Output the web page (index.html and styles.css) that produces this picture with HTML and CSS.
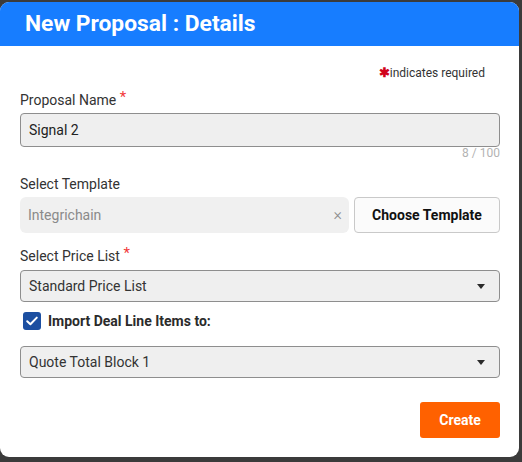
FILE: index.html
```html
<!DOCTYPE html>
<html>
<head>
<meta charset="utf-8">
<link rel="stylesheet" href="styles.css">
</head>
<body>
<div class="dialog">
  <div class="header">New Proposal : Details</div>
  <div class="content">
    <div class="req"><span class="req-star">✱</span>indicates required</div>
    <div class="label">Proposal Name <span class="star">*</span></div>
    <div class="input">Signal 2</div>
    <div class="counter">8 / 100</div>
    <div class="label label-gap">Select Template</div>
    <div class="tpl-row">
      <div class="tpl-input"><span class="tpl-text">Integrichain</span><span class="clear">×</span></div>
      <div class="btn-secondary">Choose Template</div>
    </div>
    <div class="label label-gap2">Select Price List <span class="star">*</span></div>
    <div class="select">Standard Price List<span class="caret"></span></div>
    <div class="check-row">
      <span class="checkbox"><svg width="18" height="18" viewBox="0 0 18 18"><path d="M4.2 9.2 L7.4 12.3 L13.8 5.6" fill="none" stroke="#fff" stroke-width="2" stroke-linecap="round" stroke-linejoin="round"/></svg></span>
      <span class="check-label">Import Deal Line Items to:</span>
    </div>
    <div class="select select-gap">Quote Total Block 1<span class="caret"></span></div>
    <div class="actions"><div class="btn-primary">Create</div></div>
  </div>
</div>
</body>
</html>
```
FILE: styles.css
```css
html, body {
  margin: 0;
  padding: 0;
  background: #3b3b3b;
  font-family: Roboto, "Liberation Sans", sans-serif;
}
.dialog {
  margin-top: 2px;
  width: 519px;
  height: 455px;
  background: #fff;
  border-radius: 9px;
  overflow: hidden;
}
.header {
  height: 44px;
  line-height: 44px;
  background: #177dff;
  color: #fff;
  font-size: 22.8px;
  font-weight: 700;
  padding-left: 25px;
}
.content {
  padding: 0 19px 0 20px;
}
.req {
  margin-top: 19px;
  height: 16px;
  line-height: 16px;
  font-size: 12px;
  color: #333;
  text-align: right;
  padding-right: 15px;
}
.req-star {
  color: #d0021b;
  font-size: 13px;
  font-weight: 700;
}
.label {
  margin-top: 9px;
  height: 20px;
  line-height: 20px;
  font-size: 14px;
  color: #333;
}
.label-gap { margin-top: 15px; }
.label-gap2 { margin-top: 13px; }
.star {
  color: #f23a3a;
  font-size: 15px;
  vertical-align: 3px;
  line-height: 0;
}
.input {
  margin-top: 3px;
  box-sizing: border-box;
  height: 34px;
  line-height: 32px;
  border: 1px solid #8e8e8e;
  border-radius: 4px;
  background: #efefef;
  padding-left: 8px;
  font-size: 14px;
  color: #222;
}
.counter {
  height: 12px;
  line-height: 12px;
  font-size: 12px;
  color: #b3b3b3;
  text-align: right;
}
.tpl-row {
  margin-top: 3px;
  display: flex;
  gap: 5px;
  height: 36px;
}
.tpl-input {
  width: 329px;
  box-sizing: border-box;
  background: #f0f0f0;
  border-radius: 6px;
  display: flex;
  align-items: center;
  justify-content: space-between;
  padding: 0 7px 0 8px;
  font-size: 14px;
  color: #8a8a8a;
}
.clear {
  font-size: 16px;
  font-weight: 300;
  color: #8c8c8c;
  line-height: 1;
}
.btn-secondary {
  flex: 1;
  box-sizing: border-box;
  border: 1px solid #c9c9c9;
  border-radius: 4px;
  background: #fbfbfb;
  display: flex;
  align-items: center;
  justify-content: center;
  font-size: 14px;
  font-weight: 700;
  color: #111;
}
.select {
  margin-top: 4px;
  box-sizing: border-box;
  height: 32px;
  border: 1px solid #8e8e8e;
  border-radius: 4px;
  background: #efefef;
  padding: 0 14px 0 8px;
  display: flex;
  align-items: center;
  justify-content: space-between;
  font-size: 14px;
  color: #333;
}
.select-gap { margin-top: 16px; }
.caret {
  width: 0;
  height: 0;
  border-left: 4.5px solid transparent;
  border-right: 4.5px solid transparent;
  border-top: 5px solid #2a2a2a;
  margin-top: 1px;
}
.check-row {
  margin-top: 10px;
  height: 18px;
  display: flex;
  align-items: center;
  padding-left: 3px;
}
.checkbox {
  width: 18px;
  height: 18px;
  border-radius: 3px;
  background: #1c4fa1;
  display: block;
}
.checkbox svg { display: block; }
.check-label {
  margin-left: 7px;
  font-size: 14px;
  font-weight: 700;
  color: #2b2b2b;
}
.actions {
  margin-top: 24px;
  display: flex;
  justify-content: flex-end;
}
.btn-primary {
  width: 80px;
  height: 36px;
  border-radius: 3px;
  background: #ff6100;
  color: #fff;
  font-size: 14px;
  font-weight: 700;
  display: flex;
  align-items: center;
  justify-content: center;
}
```
